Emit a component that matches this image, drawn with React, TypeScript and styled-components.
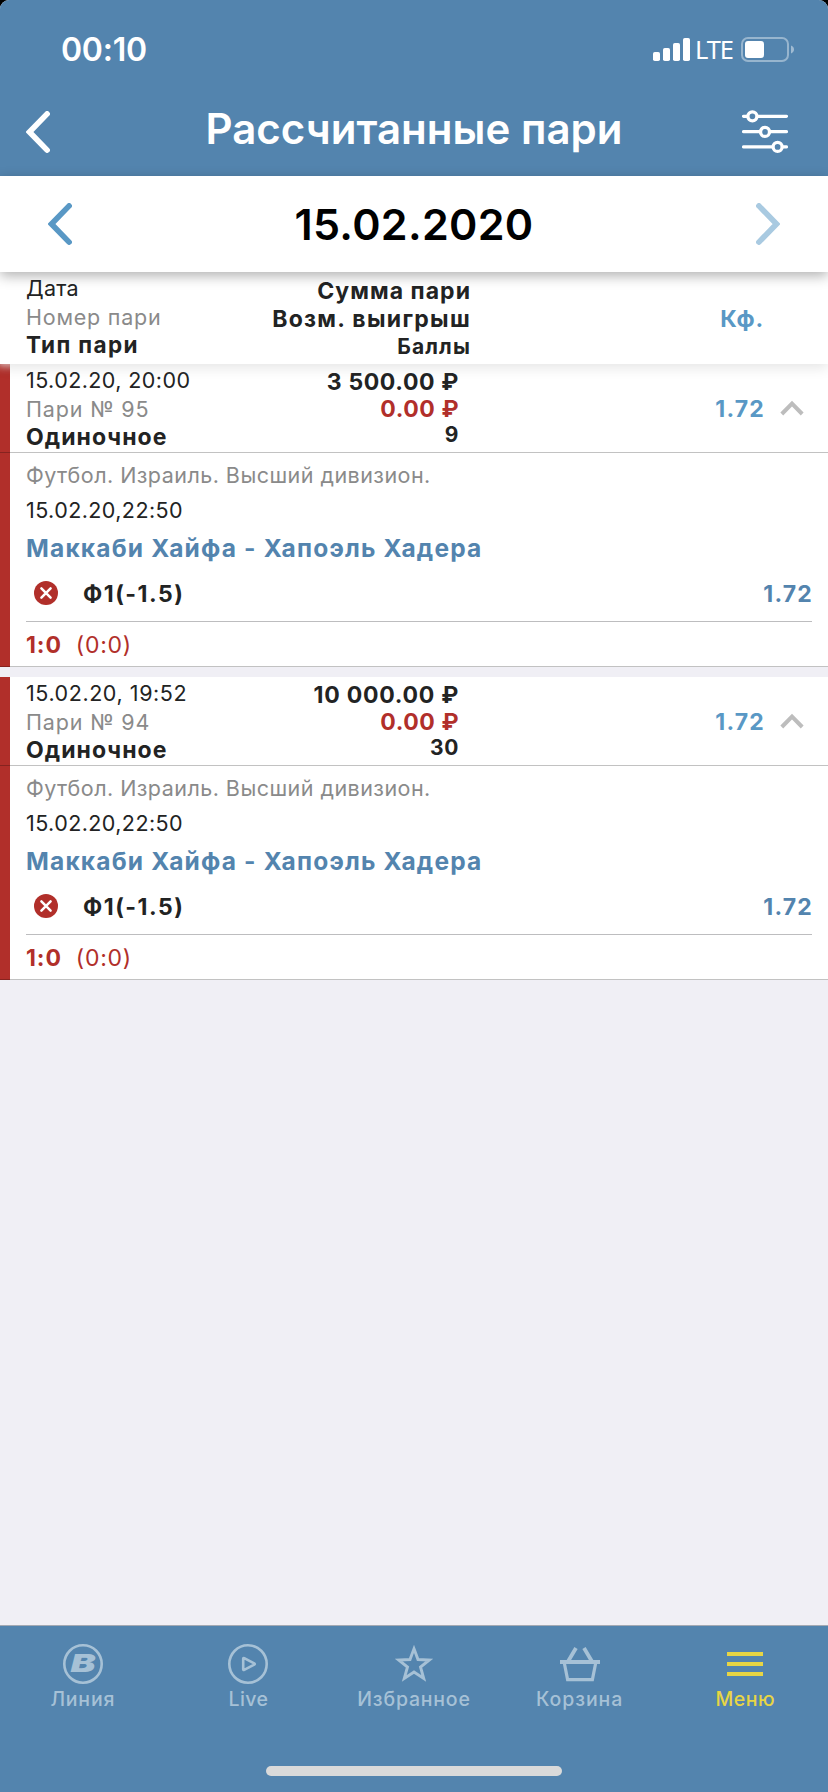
import React from 'react';
import styled, { createGlobalStyle } from 'styled-components';

const BLUE = '#5384ae';
const LIGHT_BLUE = '#5998c5';
const RED = '#b12f2a';
const INK = '#222323';
const GREY = '#8a8a8a';
const TAB = '#a6c1d6';
const YELLOW = '#e7d544';

const Global = createGlobalStyle`
  html, body { margin: 0; padding: 0; background: #000; }
  * { box-sizing: border-box; }
  body { font-family: Inter, "Liberation Sans", sans-serif; }
  svg { display: block; flex: none; }
`;

const Screen = styled.div`
  width: 828px;
  height: 1792px;
  display: flex;
  flex-direction: column;
  overflow: hidden;
  background: #f0eff5;
  border-radius: 9px 9px 0 0;
`;

const Text = styled.span<{ $size: number; $lh: number; $weight?: number; $ls?: number; $color?: string }>`
  display: block;
  white-space: pre;
  font-size: ${p => p.$size}px;
  line-height: ${p => p.$lh}px;
  font-weight: ${p => p.$weight ?? 400};
  letter-spacing: ${p => p.$ls ?? 0}px;
  color: ${p => p.$color ?? INK};
`;

const TopBar = styled.header`
  flex: none;
  height: 176px;
  background: ${BLUE};
`;

const StatusBar = styled.div`
  height: 88px;
  padding: 11px 34px 0 61px;
  display: flex;
  align-items: center;
  justify-content: space-between;
`;

const StatusIcons = styled.div`
  display: flex;
  align-items: center;
  height: 30px;
`;

const NetworkLabel = styled.span`
  width: 51px;
  padding: 0 0 2px 5px;
  font: 400 25.5px/30px "Noto Sans", sans-serif;
  letter-spacing: -1.1px;
  color: #fff;
`;

const NavBar = styled.div`
  height: 88px;
  padding: 0 40px 0 26px;
  display: grid;
  grid-template-columns: 60px 1fr 46px;
  align-items: center;
`;

const NavTitle = styled.h1`
  margin: 0 0 7px 14px;
  text-align: center;
  font-size: 42px;
  line-height: 52px;
  font-weight: 600;
  letter-spacing: 0.04px;
  color: #fff;
  padding-right: 14px;
`;

const DateBar = styled.div`
  position: relative;
  z-index: 2;
  flex: none;
  height: 96px;
  padding: 0 48px;
  display: flex;
  align-items: center;
  justify-content: space-between;
  background: #fff;
  box-shadow: 0 4px 12px rgba(0, 0, 0, 0.3);
`;

const Columns = styled.section`
  position: relative;
  z-index: 1;
  flex: none;
  height: 92px;
  display: grid;
  grid-template-columns: 200px 245px 293px;
  padding-left: 26px;
  background: #fff;
  box-shadow: 0 4px 12px rgba(0, 0, 0, 0.1), 0 0 8px 2px rgba(255, 255, 255, 0.8);
`;

const Stack = styled.div<{ $top: number; $right?: boolean }>`
  display: flex;
  flex-direction: column;
  padding-top: ${p => p.$top}px;
  align-items: ${p => (p.$right ? 'flex-end' : 'flex-start')};
`;

const OddsCell = styled.div`
  display: flex;
  align-items: center;
  justify-content: flex-end;
  padding-top: 1px;
`;

const Bet = styled.article`
  flex: none;
  margin-bottom: 10px;
  background: linear-gradient(to right, ${RED} 10px, #fff 10px) border-box;
  border-bottom: 1px solid rgba(0, 0, 0, 0.24);
`;

const BetHead = styled.div`
  height: 89px;
  padding-left: 26px;
  display: grid;
  grid-template-columns: 200px 233px 306px 39px;
  border-bottom: 1px solid rgba(0, 0, 0, 0.24);
`;

const Toggle = styled.div`
  display: flex;
  align-items: center;
  justify-content: flex-end;
`;

const BetBody = styled.div`
  padding: 4px 16px 0 26px;
`;

const Outcome = styled.div`
  height: 53px;
  padding: 0 0 4px 8px;
  display: flex;
  align-items: center;
  border-bottom: 1px solid #bdbdbf;
`;

const OutcomeName = styled.div`
  flex: 1;
  padding: 2px 0 0 25px;
`;

const OutcomeOdds = styled.div`
  margin-right: -1px;
  padding-top: 2px;
`;

const Score = styled.div`
  height: 44px;
  padding-top: 1px;
  display: flex;
  align-items: center;
  gap: 14px;
`;

const TabBar = styled.nav`
  flex: none;
  margin-top: auto;
  height: 167px;
  display: flex;
  flex-direction: column;
  align-items: center;
  background: ${BLUE};
  border-top: 1px solid #a3a9b3;
`;

const Tabs = styled.div`
  width: 100%;
  height: 140px;
  display: grid;
  grid-template-columns: repeat(5, 1fr);
`;

const Tab = styled.div<{ $active?: boolean }>`
  color: ${p => (p.$active ? YELLOW : TAB)};
  display: flex;
  flex-direction: column;
  align-items: center;
  padding-top: 16px;
`;

const TabLabel = styled.span<{ $ls: number }>`
  margin-top: -1px;
  font-size: 19.5px;
  line-height: 28px;
  font-weight: 450;
  letter-spacing: ${p => p.$ls}px;
`;

const HomeIndicator = styled.div`
  width: 296px;
  height: 10px;
  border-radius: 5px;
  background: #dadada;
`;

const Chevron = ({ color, next }: { color: string; next?: boolean }) => (
  <svg width="24" height="42" viewBox="0 0 24 42" fill="none" stroke={color} strokeWidth="5.6" strokeLinecap="round" strokeLinejoin="miter">
    <path d={next ? 'M2.9 2.9L20.5 21L2.9 39.1' : 'M21.1 2.9L3.5 21L21.1 39.1'} />
  </svg>
);

const SignalIcon = () => (
  <svg width="37" height="23" viewBox="0 0 37 23" fill="#fff">
    <rect x="0" y="14" width="7" height="9" rx="1.8" />
    <rect x="10" y="10" width="7" height="13" rx="1.8" />
    <rect x="20" y="5" width="7" height="18" rx="1.8" />
    <rect x="30" y="0" width="7" height="23" rx="1.8" />
  </svg>
);

const BatteryIcon = () => (
  <svg width="53" height="25" viewBox="0 0 53 25">
    <rect x="1" y="1" width="46" height="23" rx="6" fill="none" stroke="#fff" strokeOpacity=".4" strokeWidth="2" />
    <rect x="4" y="4" width="19" height="17" rx="3" fill="#fff" />
    <path d="M50 8.5C52 9.2 53 10.8 53 12.5S52 15.8 50 16.5Z" fill="#fff" fillOpacity=".45" />
  </svg>
);

const FilterIcon = () => (
  <svg width="46" height="44" viewBox="0 0 46 44" stroke="#fff" strokeWidth="3.3" strokeLinecap="round" fill={BLUE}>
    <path d="M1.6 6.3H44.4M1.6 21.7H44.4M1.6 36.9H44.4" />
    <circle cx="10.4" cy="6.3" r="4.5" />
    <circle cx="23" cy="21.9" r="4.5" />
    <circle cx="35.6" cy="36.9" r="4.5" />
  </svg>
);

const LostIcon = () => (
  <svg width="24" height="24" viewBox="0 0 24 24">
    <circle cx="12" cy="12" r="12" fill={RED} />
    <path d="M7.4 7.4L16.6 16.6M16.6 7.4L7.4 16.6" stroke="#fff" strokeWidth="2.5" strokeLinecap="round" />
  </svg>
);

const CollapseIcon = () => (
  <svg width="24" height="16" viewBox="0 0 24 16" fill="none" stroke="#bdbdbd" strokeWidth="4">
    <path d="M1.8 14L12 3.6L22.2 14" />
  </svg>
);

const LineIcon = () => (
  <svg width="44" height="44" viewBox="0 0 44 44">
    <circle cx="22" cy="22" r="18.7" fill="none" stroke="currentColor" strokeWidth="2.6" />
    <text x="9.6" y="30" fontFamily="Inter, sans-serif" fontSize="24.5" fontWeight="900" fontStyle="italic" textLength="25" lengthAdjust="spacingAndGlyphs" fill="currentColor">B</text>
  </svg>
);

const LiveIcon = () => (
  <svg width="44" height="44" viewBox="0 0 44 44" fill="none" stroke="currentColor" strokeWidth="2.6" strokeLinejoin="round">
    <circle cx="22" cy="22" r="18.7" />
    <path d="M17.2 16.8V27.2Q17.2 28.4 18.2 27.9L28.2 22.7Q29.4 22 28.2 21.3L18.2 16.1Q17.2 15.6 17.2 16.8Z" />
  </svg>
);

const StarIcon = () => (
  <svg width="44" height="44" viewBox="0 0 44 44" fill="none" stroke="currentColor" strokeWidth="2.9">
    <path d="M22 6.8L26 17.5L37.3 18L28.5 25L31.7 36.4L22 30L12.3 36.4L15.5 25L6.7 18L18 17.5Z" />
  </svg>
);

const BasketIcon = () => (
  <svg width="44" height="44" viewBox="0 0 44 44" fill="none" stroke="currentColor">
    <path d="M2 20H42" strokeWidth="4" />
    <path d="M18 6L10.3 19M26 6L33.7 19" strokeWidth="3.8" />
    <path d="M6.3 21L9.6 37.6H34.4L37.7 21" strokeWidth="3.2" />
  </svg>
);

const MenuIcon = () => (
  <svg width="44" height="44" viewBox="0 0 44 44" stroke="currentColor" strokeWidth="4">
    <path d="M4 12H40M4 22H40M4 32H40" />
  </svg>
);

type BetData = { placed: string; placedLs: number; number: string; stake: string; stakeLs: number; points: string };

const bets: BetData[] = [
  { placed: '15.02.20, 20:00', placedLs: 0.42, number: 'Пари № 95', stake: '3 500.00 ₽', stakeLs: 0.63, points: '9' },
  { placed: '15.02.20, 19:52', placedLs: 0.57, number: 'Пари № 94', stake: '10 000.00 ₽', stakeLs: 0.74, points: '30' },
];

const BetCard = ({ bet }: { bet: BetData }) => (
  <Bet>
    <BetHead>
      <Stack $top={2}>
        <Text $size={21.5} $lh={28.5} $ls={bet.placedLs}>{bet.placed}</Text>
        <Text $size={21.5} $lh={28.5} $ls={0.83} $color={GREY}>{bet.number}</Text>
        <Text $size={23} $lh={29} $weight={700} $ls={1.05}>Одиночное</Text>
      </Stack>
      <Stack $top={5} $right>
        <Text $size={23} $lh={27} $weight={700} $ls={bet.stakeLs}>{bet.stake}</Text>
        <Text $size={23} $lh={27} $weight={700} $ls={0.55} $color={RED}>0.00 ₽</Text>
        <Text $size={21} $lh={24} $weight={700} $ls={0.6}>{bet.points}</Text>
      </Stack>
      <OddsCell>
        <Text $size={23} $lh={28} $weight={700} $ls={1.2} $color={LIGHT_BLUE}>1.72</Text>
      </OddsCell>
      <Toggle><CollapseIcon /></Toggle>
    </BetHead>
    <BetBody>
      <Text $size={21.5} $lh={36} $ls={0.46} $color={GREY}>Футбол. Израиль. Высший дивизион.</Text>
      <Text $size={21.5} $lh={34} $ls={0.42}>15.02.20,22:50</Text>
      <Text $size={24.5} $lh={42} $weight={700} $ls={1.18} $color={BLUE}>Маккаби Хайфа - Хапоэль Хадера</Text>
      <Outcome>
        <LostIcon />
        <OutcomeName>
          <Text $size={23} $lh={28} $weight={700} $ls={1.5}>Ф1(-1.5)</Text>
        </OutcomeName>
        <OutcomeOdds>
          <Text $size={23} $lh={28} $weight={700} $ls={1.2} $color={BLUE}>1.72</Text>
        </OutcomeOdds>
      </Outcome>
      <Score>
        <Text $size={23} $lh={28} $weight={700} $ls={0.9} $color={RED}>1:0</Text>
        <Text $size={23} $lh={28} $ls={0.75} $color={RED}>(0:0)</Text>
      </Score>
    </BetBody>
  </Bet>
);

const tabs = [
  { label: 'Линия', ls: 0.8, icon: <LineIcon /> },
  { label: 'Live', ls: 0.39, icon: <LiveIcon /> },
  { label: 'Избранное', ls: 0.8, icon: <StarIcon /> },
  { label: 'Корзина', ls: 0.9, icon: <BasketIcon /> },
  { label: 'Меню', ls: 0.5, icon: <MenuIcon />, active: true },
];

export default function App() {
  return (
    <>
      <Global />
      <Screen>
        <TopBar>
          <StatusBar>
            <Text $size={32} $lh={40} $weight={600} $ls={-0.24} $color="#fff">00:10</Text>
            <StatusIcons>
              <SignalIcon />
              <NetworkLabel>LTE</NetworkLabel>
              <BatteryIcon />
            </StatusIcons>
          </StatusBar>
          <NavBar>
            <Chevron color="#fff" />
            <NavTitle>Рассчитанные пари</NavTitle>
            <FilterIcon />
          </NavBar>
        </TopBar>
        <DateBar>
          <Chevron color={LIGHT_BLUE} />
          <Text $size={43} $lh={52} $weight={560} $ls={0.3} $color="#000">15.02.2020</Text>
          <Chevron color="#a9cae1" next />
        </DateBar>
        <Columns>
          <Stack $top={2}>
            <Text $size={21.5} $lh={28.5} $ls={0.27}>Дата</Text>
            <Text $size={21.5} $lh={28.5} $ls={0.77} $color={GREY}>Номер пари</Text>
            <Text $size={22.5} $lh={28} $weight={700} $ls={1.37}>Тип пари</Text>
          </Stack>
          <Stack $top={4.5} $right>
            <Text $size={23} $lh={28} $weight={700} $ls={1.04}>Сумма пари</Text>
            <Text $size={23} $lh={28} $weight={700} $ls={1.3}>Возм. выигрыш</Text>
            <Text $size={21} $lh={27.5} $weight={700} $ls={1.15}>Баллы</Text>
          </Stack>
          <OddsCell>
            <Text $size={23} $lh={28} $weight={700} $ls={0.8} $color={LIGHT_BLUE}>Кф.</Text>
          </OddsCell>
        </Columns>
        {bets.map(b => <BetCard key={b.placed} bet={b} />)}
        <TabBar>
          <Tabs>
            {tabs.map(t => (
              <Tab key={t.label} $active={t.active}>
                {t.icon}
                <TabLabel $ls={t.ls}>{t.label}</TabLabel>
              </Tab>
            ))}
          </Tabs>
          <HomeIndicator />
        </TabBar>
      </Screen>
    </>
  );
}
